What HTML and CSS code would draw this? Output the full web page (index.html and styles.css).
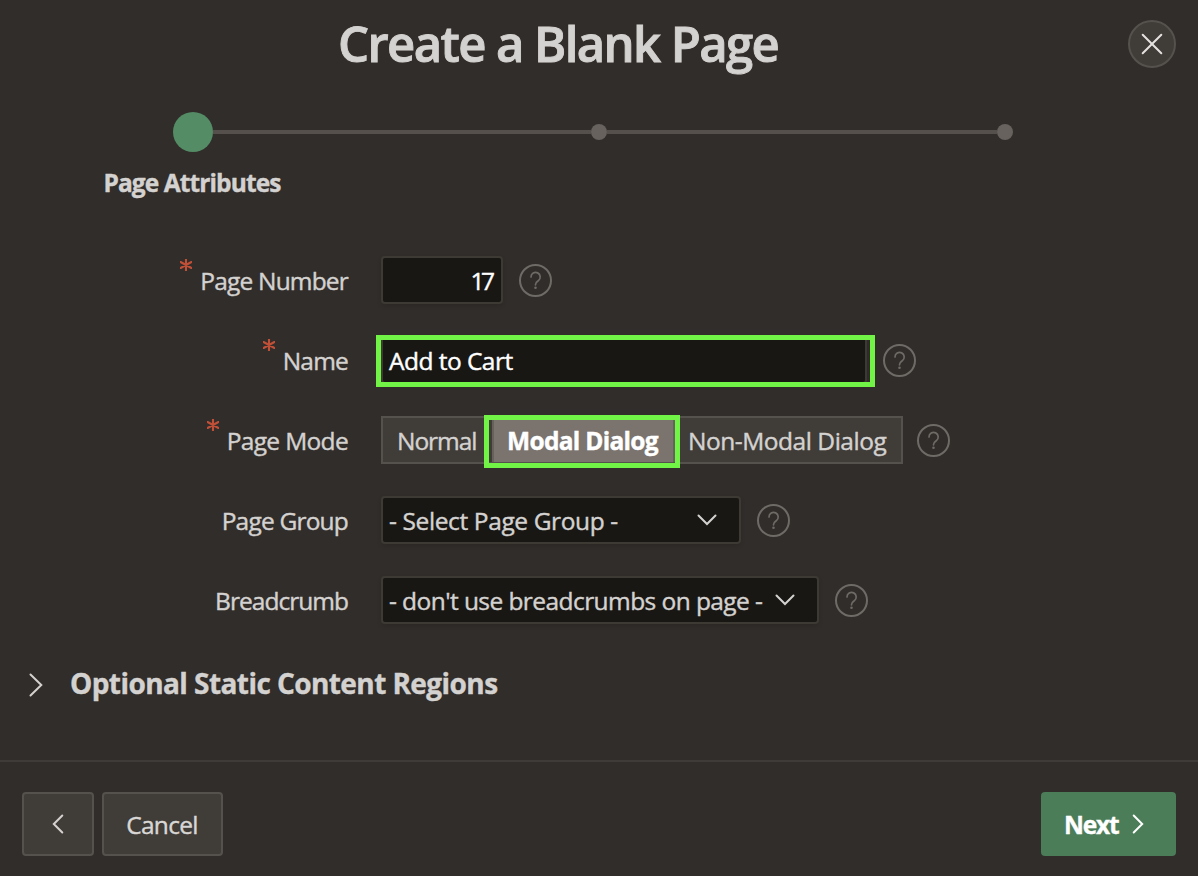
FILE: index.html
```html
<!DOCTYPE html>
<html lang="en">
<head>
<meta charset="utf-8">
<title>Create a Blank Page</title>
<link rel="stylesheet" href="styles.css">
</head>
<body>
<svg class="sprite" aria-hidden="true">
  <symbol id="help" viewBox="0 0 33 33">
    <circle cx="16.5" cy="16.5" r="15.5" fill="none" stroke="currentColor" stroke-width="2"/>
    <path d="M12 13a4.6 4.6 0 1 1 7.3 3.7c-1.7 1.2-2.8 1.7-2.8 4.1" fill="none" stroke="currentColor" stroke-width="1.7" stroke-linecap="round"/>
    <circle cx="16.5" cy="23.8" r="1.3" fill="currentColor"/>
  </symbol>
  <symbol id="star" viewBox="0 0 12 12">
    <path d="M6 0v12M0.6 3l10.8 6M11.4 3L0.6 9" fill="none" stroke="currentColor" stroke-width="2.1"/>
  </symbol>
</svg>
<div class="dialog">
  <header class="header">
    <h1 class="title">Create a Blank Page</h1>
    <button class="close" aria-label="Close"><svg width="22" height="22" viewBox="0 0 22 22"><path d="M1.7 1.7l18.6 18.6M20.3 1.7L1.7 20.3"/></svg></button>
  </header>

  <div class="wizard">
    <div class="track"><i class="step current"></i><i class="line"></i><i class="step"></i><i class="line"></i><i class="step"></i></div>
    <div class="step-label"><span class="t-step">Page Attributes</span></div>
  </div>

  <main class="form">
    <div class="row">
      <label class="label"><svg class="star"><use href="#star"/></svg><span class="t-number">Page Number</span></label>
      <div class="field number"><span class="t-17">17</span></div>
      <svg class="help"><use href="#help"/></svg>
    </div>
    <div class="row">
      <label class="label"><svg class="star"><use href="#star"/></svg><span class="t-name">Name</span></label>
      <div class="field name"><span class="t-cart">Add to Cart</span><i class="mark mark-name"></i></div>
      <svg class="help"><use href="#help"/></svg>
    </div>
    <div class="row">
      <label class="label"><svg class="star"><use href="#star"/></svg><span class="t-mode">Page Mode</span></label>
      <div class="modes">
        <div class="mode normal"><span class="t-normal">Normal</span></div>
        <div class="mode modal"><span class="t-modal">Modal Dialog</span><i class="mark mark-modal"></i></div>
        <div class="mode nonmodal"><span class="t-nonmodal">Non-Modal Dialog</span></div>
      </div>
      <svg class="help near"><use href="#help"/></svg>
    </div>
    <div class="row">
      <label class="label"><span class="t-group">Page Group</span></label>
      <div class="field select group"><span class="t-selgroup">- Select Page Group -</span><svg class="chev" viewBox="0 0 20 12"><path d="M1.5 1.5L10 10l8.5-8.5"/></svg></div>
      <svg class="help"><use href="#help"/></svg>
    </div>
    <div class="row">
      <label class="label"><span class="t-bread">Breadcrumb</span></label>
      <div class="field select crumb"><span class="t-selbread">- don't use breadcrumbs on page -</span><svg class="chev" viewBox="0 0 20 12"><path d="M1.5 1.5L10 10l8.5-8.5"/></svg></div>
      <svg class="help"><use href="#help"/></svg>
    </div>
  </main>

  <section class="region">
    <svg class="region-chev" viewBox="0 0 14 24"><path d="M1.5 1.5L12.3 12L1.5 22.5"/></svg>
    <h2 class="region-title">Optional Static Content Regions</h2>
  </section>

  <footer class="footer">
    <button class="btn back" aria-label="Back"><svg width="12" height="20" viewBox="0 0 12 20"><path d="M10.3 1.5L1.8 10l8.5 8.5"/></svg></button>
    <button class="btn cancel"><span class="t-cancel">Cancel</span></button>
    <button class="btn next"><span class="t-next">Next</span><svg width="12" height="20" viewBox="0 0 12 20"><path d="M1.7 1.5L10.2 10l-8.5 8.5"/></svg></button>
  </footer>
</div>
</body>
</html>
```
FILE: styles.css
```css
* { box-sizing: border-box; }
body { margin: 0; background: #312d2a; }
.sprite { display: none; }
.dialog {
  width: 1198px; height: 876px; overflow: hidden;
  display: flex; flex-direction: column;
  background: #312d2a; color: #d4d2d0;
  font: 24.5px/34px "Open Sans", "Noto Sans", sans-serif;
  -webkit-text-stroke: .4px currentColor;
  white-space: nowrap;
}
svg path { fill: none; stroke-linecap: round; }

.header { position: relative; height: 112px; }
.title { margin: 0; padding: 9px 0 0 338px; font-size: 49px; line-height: 68px; font-weight: 600; letter-spacing: -1.6px; -webkit-text-stroke-width: .9px; }
.close {
  position: absolute; top: 20px; right: 22px; width: 48px; height: 48px; padding: 0;
  display: grid; place-items: center;
  border: 2px solid #55514d; border-radius: 50%; background: #403c38;
}
.close path { stroke: #e4e2e0; stroke-width: 2; }

.wizard { height: 144px; padding-left: 173px; }
.track { display: flex; align-items: center; width: 840px; height: 40px; }
.step { width: 16px; height: 16px; border-radius: 50%; background: #67625e; }
.step.current { width: 40px; height: 40px; background: #538c65; }
.line { flex: none; width: 378px; height: 4px; background: #55504c; }
.line + .step + .line { width: 390px; }
.step-label { width: 38px; margin-top: 14px; display: flex; justify-content: center; font-weight: 700; }

.form { display: flex; flex-direction: column; gap: 32px; }
.row { display: flex; align-items: center; height: 48px; }
.label { position: relative; width: 381px; padding: 2px 33px 0 0; display: flex; justify-content: flex-end; gap: 8px; }
.star { width: 12px; height: 12px; color: #c04f38; margin-top: -5px; }
.field {
  position: relative; height: 48px; display: flex; align-items: center; padding: 2px 6px 0;
  border: 2px solid #3d3a34; border-radius: 4px; background: #191714; color: #fff;
  box-shadow: 0 2px 4px rgba(0, 0, 0, .12);
}
.number { width: 122px; justify-content: flex-end; }
.name { width: 486px; }
.group { width: 360px; }
.crumb { width: 438px; }
.select { justify-content: space-between; color: #d4d2d0; padding-right: 22px; }
.chev { flex: none; width: 20px; height: 12px; margin-top: -3px; }
.chev path { stroke: #d4d2d0; stroke-width: 2; }
.help { flex: none; width: 33px; height: 33px; margin-left: 16px; color: #6e6a66; }
.help.near { margin-left: 14px; }

.modes { display: flex; width: 522px; height: 48px; border: 2px solid #55514d; background: #403c38; }
.mode { position: relative; display: flex; align-items: center; padding-top: 2px; }
.normal { width: 109px; padding-left: 14px; }
.modal { width: 183px; justify-content: center; color: #fff; font-weight: 700; background: #7a736e; border: 0 solid #67615c; border-width: 0 2px; }
.modal span { margin-right: 2px; }
.nonmodal { padding-left: 13px; }
.mark { position: absolute; border: 5px solid #72f447; }
.mark-name { left: -7px; top: -3px; width: 499px; height: 52px; }
.mark-modal { left: -10px; top: -3px; width: 196px; height: 53px; }

.region { display: flex; align-items: center; height: 40px; margin-top: 40px; padding-left: 29px; gap: 27px; }
.region-chev { width: 14px; height: 24px; margin-top: 2px; }
.region-chev path, .back path { stroke: #d4d2d0; stroke-width: 2; }
.region-title { margin: -2px 0 0; font-size: 28px; line-height: 40px; font-weight: 700; letter-spacing: -.57px; }

.footer { display: flex; gap: 8px; height: 116px; margin-top: auto; padding: 30px 22px 0; border-top: 2px solid #3f3b38; }
.btn {
  display: flex; align-items: center; justify-content: center; height: 64px; padding: 0;
  border: 2px solid #55514d; border-radius: 4px; background: #403c38; color: #d9d7d5; font: inherit;
}
.btn span { padding-top: 2px; }
.back { width: 72px; }
.cancel { width: 121px; }
.next { width: 135px; margin-left: auto; justify-content: flex-start; padding-left: 23px; gap: 14px; border: 0; background: #4a7d58; color: #fff; font-weight: 700; }
.next path { stroke: #fff; stroke-width: 2; }

/* Tracking per text run, condensing Open Sans to the dialog's narrower metrics */
.t-step { letter-spacing: -.9px; }
.t-number { letter-spacing: -.82px; }
.t-name { letter-spacing: -.8px; }
.t-mode { letter-spacing: -.67px; }
.t-group { letter-spacing: -.8px; }
.t-bread { letter-spacing: -.97px; }
.t-17 { letter-spacing: -3.6px; margin-right: 3.6px; }
.t-cart { letter-spacing: -.53px; }
.t-normal { letter-spacing: -1.05px; }
.t-modal { letter-spacing: -.7px; }
.t-nonmodal { letter-spacing: -.47px; }
.t-selgroup { letter-spacing: -.38px; }
.t-selbread { letter-spacing: -.57px; }
.t-cancel { letter-spacing: -.7px; margin-right: 1px; }
.t-next { letter-spacing: -1.2px; }
```
